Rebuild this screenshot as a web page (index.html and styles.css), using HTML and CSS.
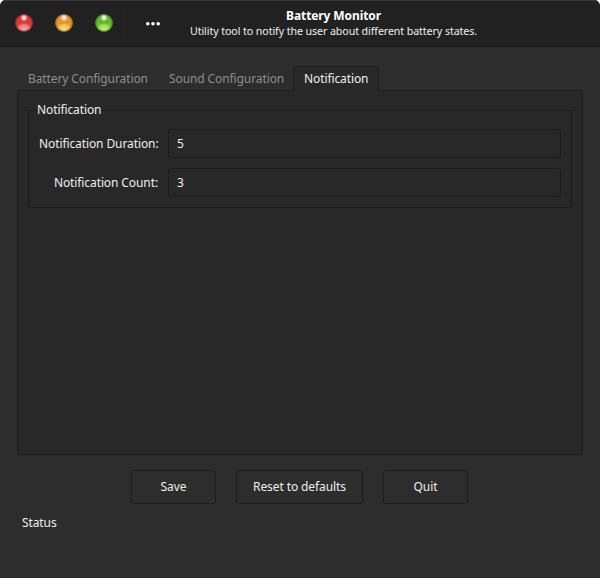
FILE: index.html
```html
<!DOCTYPE html>
<html lang="en">
<head>
<meta charset="utf-8">
<title>Battery Monitor</title>
<link rel="stylesheet" href="styles.css">
</head>
<body>
<div class="window">
  <header class="titlebar">
    <div class="controls">
      <span class="orb red"></span>
      <span class="orb orange"></span>
      <span class="orb green"></span>
      <span class="separator"></span>
      <svg class="more" width="16" height="16" viewBox="0 0 16 16" fill="#fff"><circle cx="2.8" cy="7.7" r="1.8"/><circle cx="8" cy="7.7" r="1.8"/><circle cx="13.2" cy="7.7" r="1.8"/></svg>
    </div>
    <div class="titles">
      <h1>Battery Monitor</h1>
      <p>Utility tool to notify the user about different battery states.</p>
    </div>
  </header>
  <main class="content">
    <nav class="tabs">
      <span class="tab tab-battery">Battery Configuration</span>
      <span class="tab tab-sound">Sound Configuration</span>
      <span class="tab active">Notification</span>
    </nav>
    <section class="page">
      <fieldset class="group">
        <legend>Notification</legend>
        <label for="duration">Notification Duration:</label>
        <input id="duration" type="text" value="5">
        <label for="count">Notification Count:</label>
        <input id="count" type="text" value="3">
      </fieldset>
    </section>
    <div class="actions">
      <button class="small">Save</button>
      <button class="wide">Reset to defaults</button>
      <button class="small">Quit</button>
    </div>
    <p class="status">Status</p>
  </main>
</div>
</body>
</html>
```
FILE: styles.css
```css
* { box-sizing: border-box; }
body {
  margin: 0;
  background: #fff;
  color: #eee;
  font: 12px/16px "Noto Sans", sans-serif;
  letter-spacing: -0.1px;
}
h1, p { margin: 0; }
.window {
  height: 578px;
  overflow: hidden;
  background: #2d2d2d;
  border-radius: 6px 6px 0 0;
  border-bottom: 1px solid #302329;
}
.titlebar {
  display: flex;
  height: 47px;
  background: #212121;
  border-top: 1px solid #383838;
  border-bottom: 1px solid #191919;
}
.controls {
  display: flex;
  align-items: center;
  width: 190px;
  padding-left: 15px;
}
.orb {
  width: 18px;
  height: 18px;
  margin: 0 22px 1px 0;
  border-radius: 50%;
}
.red {
  background:
    radial-gradient(circle at 9px 3.8px, #ffe2e2 0 1.2px, #ffb0b099 2.4px, transparent 4px),
    radial-gradient(closest-side, transparent 76%, #962626 100%),
    radial-gradient(ellipse 8px 6px at 9px 15px, #f2a8a8 0, #e67777 75%, transparent 100%),
    #d93838;
}
.orange {
  background:
    radial-gradient(circle at 9px 3.8px, #fff0e2 0 1.2px, #ffd2a099 2.4px, transparent 4px),
    radial-gradient(closest-side, transparent 76%, #99601c 100%),
    radial-gradient(ellipse 8px 6px at 9px 15px, #f0e480 0, #e9bd50 75%, transparent 100%),
    #e49430;
}
.green {
  margin-right: 14px;
  background:
    radial-gradient(circle at 9px 3.8px, #efffe8 0 1.2px, #b8f0a099 2.4px, transparent 4px),
    radial-gradient(closest-side, transparent 76%, #3f7a20 100%),
    radial-gradient(ellipse 8px 6px at 9px 15px, #ccf078 0, #98d650 75%, transparent 100%),
    #65b532;
}
.separator {
  width: 1px;
  height: 34px;
  margin-right: 17px;
  background: #1e1e1e;
}
.titles {
  display: flex;
  flex-direction: column;
  align-items: center;
  width: 287px;
  padding-top: 7px;
  white-space: nowrap;
}
h1 { font-size: 12px; line-height: 16px; color: #fff; }
.titles p { font-size: 10.67px; line-height: 14px; letter-spacing: -0.09px; }
.content { padding: 19px 17px 0; }
.tabs {
  display: flex;
  height: 25px;
  margin-bottom: -1px;
}
.tab {
  padding: 5px 0 0 11px;
  color: #8e8e8e;
  white-space: nowrap;
}
.tab-battery { width: 141px; }
.tab-sound { width: 135px; }
.tab.active {
  position: relative;
  width: 86px;
  padding: 4px 0 0 10px;
  color: #eee;
  background: #282828;
  border: 1px solid #1d1d1d;
  border-bottom: 0;
}
.page {
  height: 365px;
  padding: 11px 10px 0;
  background: #282828;
  border: 1px solid #1d1d1d;
}
.group {
  display: grid;
  grid-template-columns: 119px 1fr;
  grid-auto-rows: 29px;
  gap: 10px;
  align-items: center;
  height: 106px;
  margin: 0;
  padding: 11px 10px 0;
  border: 1px solid #1d1d1d;
}
legend {
  margin-left: -2px;
  padding: 0;
}
.group label { text-align: right; white-space: nowrap; }
input {
  width: 100%;
  height: 29px;
  padding: 0 8px;
  color: #eee;
  font: inherit;
  background: #282828;
  border: 1px solid #1d1d1d;
  border-radius: 3px;
}
.actions {
  display: flex;
  justify-content: center;
  gap: 20px;
  margin-top: 15px;
  padding-right: 1px;
}
button {
  height: 34px;
  padding: 0;
  color: #eee;
  font: inherit;
  letter-spacing: inherit;
  background: #2d2d2d;
  border: 1px solid #1d1d1d;
  border-radius: 3px;
}
.small { width: 85px; }
.wide { width: 127px; }
.status { margin: 11px 0 0 5px; }
```
